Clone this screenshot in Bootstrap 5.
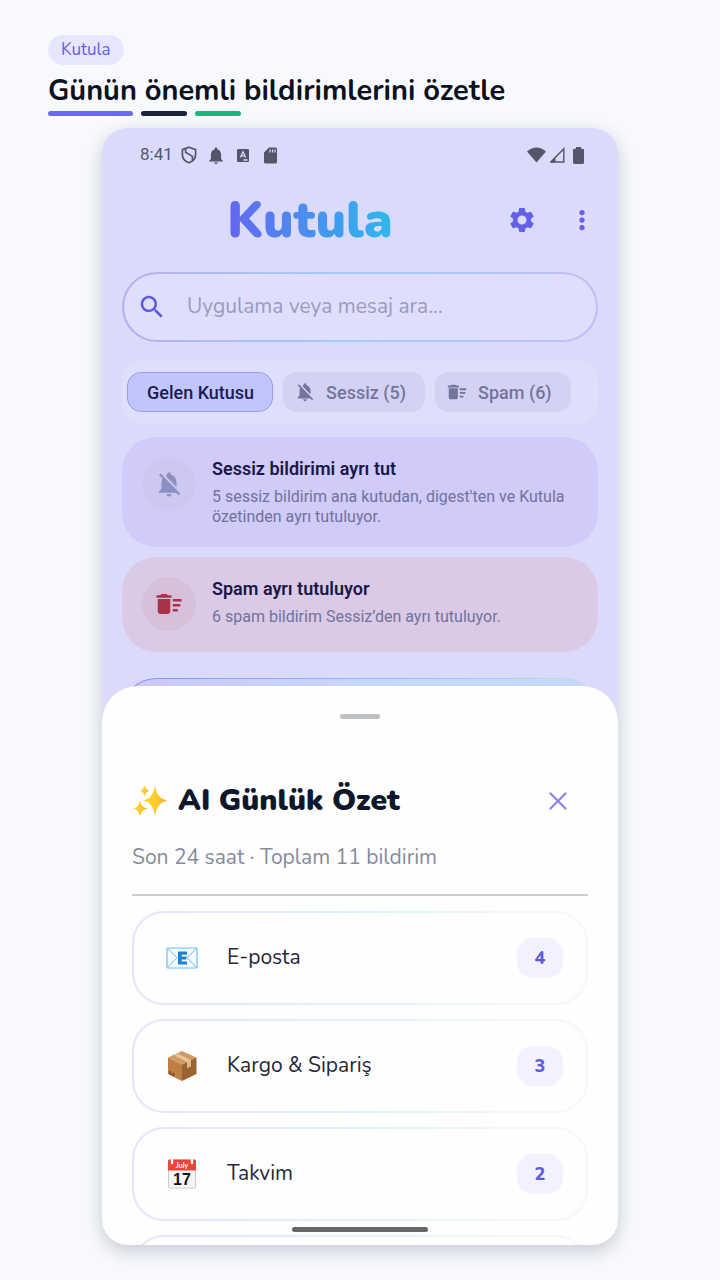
<!DOCTYPE html>
<html lang="tr">
<head>
<meta charset="utf-8">
<meta name="viewport" content="width=device-width, initial-scale=1">
<title>Kutula</title>
<link href="https://cdn.jsdelivr.net/npm/bootstrap@5.3.0/dist/css/bootstrap.min.css" rel="stylesheet">
<style>
:root{--ink:#0f172a;--indigo:#6460e8;--round:Nunito,Lato,"Open Sans",sans-serif}
body{background:#f7f9fd;color:var(--ink);font-family:Roboto,"Noto Sans",sans-serif}
svg{display:block;flex:none}
.round-font{font-family:var(--round)}
.promo{padding:35px 48px 0}
.brand-tag{background:#e6e6fd;color:var(--indigo);font-size:17px;line-height:30px;padding:0 13px}
.promo h1{font-size:29px;line-height:38px;margin:7px 0 1px;font-weight:700;color:#0b1120}
.stripe{height:5px;width:46px;border-radius:3px}
.stripe-long{width:85px;background:#6c69f0}
.stripe-dark{background:#1b2434}
.stripe-green{background:#16b67f}
.stage{padding:12px 102px 35px;min-height:0}
.phone{background:#dadbfb;border-radius:26px;box-shadow:0 6px 16px 2px rgba(20,24,40,.17);min-height:0}
.status{padding:2px 34px 0 38px;height:52px;color:#55566a;font-size:17px}
.appbar{padding:0 6px 0 26px;height:80px}
.logo{font-size:51px;line-height:80px;font-weight:900;background:linear-gradient(90deg,#6366f1,#4a90ee 50%,#2fb9ec);-webkit-background-clip:text;background-clip:text;color:transparent}
.tool{width:60px;color:#6460e8}
.app-body{padding:12px 20px 0}
.search{height:70px;border:2px solid transparent;border-radius:35px;padding:0 13px;gap:20px;
 background:linear-gradient(#dfdefc,#dfdefc) padding-box,linear-gradient(90deg,#b7aef0,#a3cbf6 45%,#a9c9f6 65%,#c4bdf4) border-box;color:#5d59dc}
.search input{font-size:21px;color:#8f8fb4;min-width:0}
.search input::placeholder{color:#9a9bbf;opacity:1}
.tabs-bar{background:#dedffb;border-radius:20px;padding:12px 5px;margin:18px 0 13px;gap:10px}
.chip{height:40px;border-radius:14px;background:#d4d2f2;border:0;color:#73749e;font-size:18px;font-weight:500;padding:0 19px 0 11px;gap:10px}
.chip-on{background:#c0c6fb;border:1px solid #a097ee;color:#1d1d4e;padding:0 18px 0 19px}
.note{border-radius:34px;background:#d0cbf8;padding:20px;gap:16px}
.note+.note{margin-top:10px}
.note-spam{background:#dbcae5}
.disc{width:54px;height:54px;background:#cdc8f2;color:#8d8fc0}
.note-spam .disc{background:#d5c1da;color:#a83349}
.note h2{font-size:18px;line-height:24px;margin:0 0 6px;font-weight:600;color:#1a184a}
.note p{font-size:16px;line-height:20px;margin:0;color:#7072a0}
.note div{min-height:55px}
.peek{height:40px;margin-top:26px;border:1px solid transparent;border-radius:34px 34px 0 0;
 background:linear-gradient(90deg,#cac8fa,#c6d8fb 60%) padding-box,linear-gradient(90deg,#958dea,#93bff2 60%,#c6d8fb) border-box}
.sheet{margin-top:-32px;background:#fefefe;border-radius:36px 36px 0 0;padding:28px 30px 0;min-height:0}
.grip{width:40px;height:5px;background:#bcc1c6;border-radius:3px}
.sheet-head{margin-top:62px;height:40px}
.sheet-head h2{font-size:30px;line-height:40px;font-weight:900;gap:10px}
.close-btn{width:60px;color:#8a86ea}
.sub{font-size:21px;line-height:24px;margin:24px 0 25px;color:#868b9c}
.rule{height:2px;background:#cbccd0}
.groups{gap:14px;margin-top:15px;min-height:0;overflow:auto;scrollbar-width:none}
.group-row{flex:none;height:94px;border:2px solid transparent;border-radius:32px;padding:0 23px 0 30px;font-size:21px;color:#26283a;
 background:linear-gradient(#fefefe,#fefefe) padding-box,linear-gradient(90deg,#e6e4fb,#dcf2fb 50%,#e4f7f8 65%,#f7f7fb 85%) border-box}
.row-name{margin-left:27px}
.count{width:46px;height:40px;border-radius:16px;background:#f2f1fe;color:#5f5bdb;font-size:18px;font-weight:800}
.home-bar{width:136px;height:5px;border-radius:3px;background:#666;bottom:13px;z-index:3}
</style>
</head>
<body class="vh-100 d-flex flex-column overflow-hidden">
<svg class="d-none" aria-hidden="true">
 <symbol id="mute" viewBox="0 0 24 24"><path fill="currentColor" d="M20 18.69L7.84 6.14 5.27 3.49 4 4.76l2.8 2.8v.01c-.52.99-.8 2.16-.8 3.42v5l-2 2v1h13.73l2 2L21 19.72l-1-1.03zM12 22c1.11 0 2-.89 2-2h-4c0 1.11.89 2 2 2zm6-7.32V11c0-3.08-1.64-5.64-4.5-6.32V4c0-.83-.67-1.5-1.5-1.5s-1.5.67-1.5 1.5v.68c-.5.12-1 .3-1.44.55L18 14.68z"/></symbol>
 <symbol id="sweep" viewBox="0 0 24 24"><path fill="currentColor" d="M15 16h4v2h-4zm0-8h7v2h-7zm0 4h6v2h-6zM3 18c0 1.1.9 2 2 2h6c1.1 0 2-.9 2-2V8H3v10zM14 5h-3l-1-1H6L5 5H2v2h12z"/></symbol>
</svg>

<header class="promo round-font">
 <span class="brand-tag rounded-pill d-inline-block align-top">Kutula</span>
 <h1>Günün önemli bildirimlerini özetle</h1>
 <div class="d-flex gap-2"><span class="stripe stripe-long"></span><span class="stripe stripe-dark"></span><span class="stripe stripe-green"></span></div>
</header>

<main class="stage flex-grow-1 d-flex flex-column">
<div class="phone position-relative flex-grow-1 d-flex flex-column overflow-hidden">
 <div class="status d-flex align-items-center flex-shrink-0">
  <span class="me-2">8:41</span>
  <svg width="16" height="18" viewBox="0 0 16 18" fill="none" stroke="currentColor" stroke-width="1.700"><path d="M8 1.200 14.600 3.600V8.400c0 4-2.800 7-6.600 8.400C4.200 15.400 1.400 12.400 1.400 8.400V3.600z"/><path d="M4.600 2.600V6.200l6.800 4.200v4"/></svg>
  <svg class="ms-2" width="22" height="17" viewBox="1 2 22 20"><path fill="currentColor" d="M12 22c1.100 0 2-.9 2-2h-4c0 1.100.9 2 2 2zm6-6v-5c0-3.070-1.630-5.640-4.500-6.320V4c0-.83-.67-1.500-1.500-1.500s-1.500.67-1.500 1.500v.68C7.640 5.360 6 7.920 6 11v5l-2 2v1h16v-1l-2-2z"/></svg>
  <svg class="ms-2" width="16" height="16" viewBox="0 0 16 16"><rect x="2" y="2" width="12" height="13" rx="1" fill="currentColor"/><path d="M5.400 10.500 8 4.800l2.600 5.700M6.300 8.800h3.400M8.500 13h4" fill="none" stroke="#dadbfb" stroke-width="1.300"/></svg>
  <svg class="ms-2 me-2" width="22" height="17" viewBox="-5 0 22 17"><path fill="currentColor" d="M5 .5h6.500Q13 .5 13 2v13q0 1.500-1.500 1.500h-10Q0 16.500 0 15V5.500z"/><path d="M6 2.500v3M8.500 2.500v3M11 2.500v3" stroke="#dadbfb" stroke-width="1.200"/></svg>
  <svg class="ms-auto" width="19" height="16" viewBox="0 0 19 16"><path fill="currentColor" d="M0 4.500Q9.500-3.500 19 4.500L9.500 15.500z"/></svg>
  <svg class="ms-1" width="15" height="16" viewBox="1 0 15 16"><path d="M1.800 15 14.800 1.800V15z" fill="none" stroke="currentColor" stroke-width="1.400"/><path fill="currentColor" d="M1 15.500 6.500 10v5.500z"/></svg>
  <svg class="ms-2" width="11" height="17" viewBox="0 0 11 17"><path fill="currentColor" d="M3 0h5v1.700h1.500Q11 1.700 11 3v12.500Q11 17 9.500 17h-8Q0 17 0 15.500V3q0-1.300 1.500-1.300H3z"/></svg>
 </div>

 <div class="appbar d-flex align-items-center flex-shrink-0">
  <div class="flex-grow-1 text-center"><span class="logo round-font d-inline-block">Kutula</span></div>
  <button class="tool btn p-0 border-0 d-flex justify-content-center" aria-label="Ayarlar"><svg width="30" height="30" viewBox="0 0 24 24"><path fill="currentColor" fill-rule="evenodd" d="M19.140 12.940c.04-.3.06-.61.06-.94 0-.32-.02-.64-.07-.94l2.030-1.580c.18-.14.23-.41.12-.61l-1.920-3.320c-.12-.22-.37-.29-.59-.22l-2.390.96c-.5-.38-1.030-.7-1.620-.94l-.36-2.540c-.04-.24-.24-.41-.48-.41h-3.840c-.24 0-.43.17-.47.41l-.36 2.540c-.59.24-1.130.57-1.620.94l-2.390-.96c-.22-.08-.47 0-.59.22L2.740 8.870c-.12.21-.08.47.12.61l2.030 1.580c-.05.3-.09.63-.09.94s.02.64.07.94l-2.030 1.580c-.18.14-.23.41-.12.61l1.920 3.320c.12.22.37.29.59.22l2.390-.96c.5.38 1.030.7 1.620.94l.36 2.540c.05.24.24.41.48.41h3.840c.24 0 .44-.17.47-.41l.36-2.540c.59-.24 1.130-.56 1.620-.94l2.390.96c.22.08.47 0 .59-.22l1.920-3.320c.12-.22.07-.47-.12-.61l-2.010-1.580zM12 15.600a3.600 3.600 0 1 1 0-7.200 3.600 3.600 0 0 1 0 7.200z"/></svg></button>
  <button class="tool btn p-0 border-0 d-flex justify-content-center" aria-label="Diğer"><svg width="30" height="30" viewBox="0 0 24 24" fill="currentColor"><circle cx="12" cy="6" r="2.100"/><circle cx="12" cy="12" r="2.100"/><circle cx="12" cy="18" r="2.100"/></svg></button>
 </div>

 <div class="app-body flex-shrink-0">
  <label class="search d-flex align-items-center">
   <svg width="30" height="30" viewBox="0 0 24 24"><path fill="currentColor" d="M15.500 14h-.79l-.28-.27C15.410 12.590 16 11.110 16 9.500 16 5.910 13.090 3 9.500 3S3 5.910 3 9.500 5.910 16 9.500 16c1.610 0 3.090-.59 4.230-1.570l.27.28v.79l5 4.990L20.490 19l-4.990-5zm-6 0C7.010 14 5 11.990 5 9.500S7.010 5 9.500 5 14 7.010 14 9.500 11.990 14 9.500 14z"/></svg>
   <input type="search" class="round-font flex-grow-1 border-0 bg-transparent p-0" aria-label="Ara" placeholder="Uygulama veya mesaj ara…">
  </label>
  <nav class="tabs-bar d-flex overflow-hidden">
   <button class="chip chip-on text-nowrap">Gelen Kutusu</button>
   <button class="chip d-flex align-items-center text-nowrap"><svg width="22" height="22"><use href="#mute"/></svg>Sessiz (5)</button>
   <button class="chip d-flex align-items-center text-nowrap"><svg width="22" height="22"><use href="#sweep"/></svg>Spam (6)</button>
  </nav>
  <section class="note d-flex align-items-start">
   <span class="disc rounded-circle d-flex align-items-center justify-content-center flex-shrink-0"><svg width="30" height="30"><use href="#mute"/></svg></span>
   <div><h2>Sessiz bildirimi ayrı tut</h2><p>5 sessiz bildirim ana kutudan, digest'ten ve Kutula özetinden ayrı tutuluyor.</p></div>
  </section>
  <section class="note note-spam d-flex align-items-start">
   <span class="disc rounded-circle d-flex align-items-center justify-content-center flex-shrink-0"><svg width="30" height="30"><use href="#sweep"/></svg></span>
   <div><h2>Spam ayrı tutuluyor</h2><p>6 spam bildirim Sessiz’den ayrı tutuluyor.</p></div>
  </section>
  <div class="peek"></div>
 </div>

 <section class="sheet round-font position-relative flex-grow-1 d-flex flex-column">
  <div class="grip mx-auto flex-shrink-0"></div>
  <div class="sheet-head d-flex align-items-center justify-content-between flex-shrink-0">
   <h2 class="m-0 d-flex align-items-center">
    <svg width="36" height="36" viewBox="0 0 36 36"><defs><linearGradient id="gold"><stop stop-color="#fdd835"/><stop offset=".6" stop-color="#fbc92e"/><stop offset="1" stop-color="#f4a62a"/></linearGradient></defs><g fill="url(#gold)"><path d="M23 2Q24.500 15.500 35.500 17.500 24.500 19.500 23 34 21.500 19.500 11 17.500 21.500 15.500 23 2z"/><path d="M8 17.500Q9.300 24.500 15.500 25.500 9.300 26.800 8 33.500 6.700 26.800 1 25.500 6.700 24.500 8 17.500z"/><path d="M12.500 2Q13.500 6.800 17.500 7.700 13.500 8.600 12.500 13.500 11.500 8.600 8 7.700 11.500 6.800 12.500 2z"/></g></svg>
    AI Günlük Özet</h2>
   <button class="close-btn btn p-0 border-0 d-flex justify-content-center" aria-label="Kapat"><svg width="18" height="18" viewBox="0 0 18 18"><path d="M1.500 1.500l15 15M16.500 1.500l-15 15" stroke="currentColor" stroke-width="2.200" stroke-linecap="round"/></svg></button>
  </div>
  <p class="sub flex-shrink-0">Son 24 saat · Toplam 11 bildirim</p>
  <div class="rule flex-shrink-0"></div>
  <div class="groups d-flex flex-column">
   <div class="group-row d-flex align-items-center">
    <svg width="36" height="32" viewBox="0 0 36 32"><rect x="3" y="6" width="30" height="20" rx="1" fill="#f7fcff" stroke="#6abdf2" stroke-width="1.200"/><path d="M3.500 6.500 13 15.500 3.500 25.500M32.500 6.500 23 15.500l9.500 10" fill="none" stroke="#6abdf2"/><path d="M14 9.500h9v3.200h-5.300v1.700h4.800v3.100h-4.800v1.900H23v3.200h-9z" fill="#1a82d8"/></svg>
    <span class="row-name">E-posta</span><span class="count ms-auto d-flex align-items-center justify-content-center">4</span>
   </div>
   <div class="group-row d-flex align-items-center">
    <svg width="36" height="32" viewBox="0 0 36 32"><path d="M18 1 32.500 7.500 18 14.500 4 7.500z" fill="#cf9a63"/><path d="M4 7.500 18 14.500V31L4 24z" fill="#bd7f42"/><path d="M32.500 7.500 18 14.500V31l14.500-7z" fill="#9c6230"/><path d="M9.500 4.800 13 3.200l14 7v6l-4 1.800v-6z" fill="#e8c699"/><path d="M23 12 27 10.200v6L23 18z" fill="#dbb88c"/><path d="M6 21v3M9.500 22.500v3M5.500 23.500l5 2.500" stroke="#70431f" stroke-width="1.200"/></svg>
    <span class="row-name">Kargo &amp; Sipariş</span><span class="count ms-auto d-flex align-items-center justify-content-center">3</span>
   </div>
   <div class="group-row d-flex align-items-center">
    <svg width="36" height="32" viewBox="0 0 36 32"><rect x="4.500" y="2" width="27" height="28" rx="1.500" fill="#f5f5f5" stroke="#c9c9c9"/><path d="M4 12.500V3q0-1.500 1.500-1.500h25Q32 1.500 32 3v9.500z" fill="#f04438"/><path d="M8 2v3M28 2v3" stroke="#fff" stroke-width="2.400" stroke-linecap="round"/><text x="18" y="10" text-anchor="middle" font-family="Lato,sans-serif" font-size="7" font-weight="700" fill="#fff">July</text><text x="18" y="26.500" text-anchor="middle" font-family="Liberation Sans,sans-serif" font-size="16" font-weight="700" fill="#111">17</text></svg>
    <span class="row-name">Takvim</span><span class="count ms-auto d-flex align-items-center justify-content-center">2</span>
   </div>
   <div class="group-row"></div>
  </div>
 </section>
 <div class="home-bar position-absolute start-50 translate-middle-x"></div>
</div>
</main>
<script src="https://cdn.jsdelivr.net/npm/bootstrap@5.3.0/dist/js/bootstrap.bundle.min.js"></script>
</body>
</html>
